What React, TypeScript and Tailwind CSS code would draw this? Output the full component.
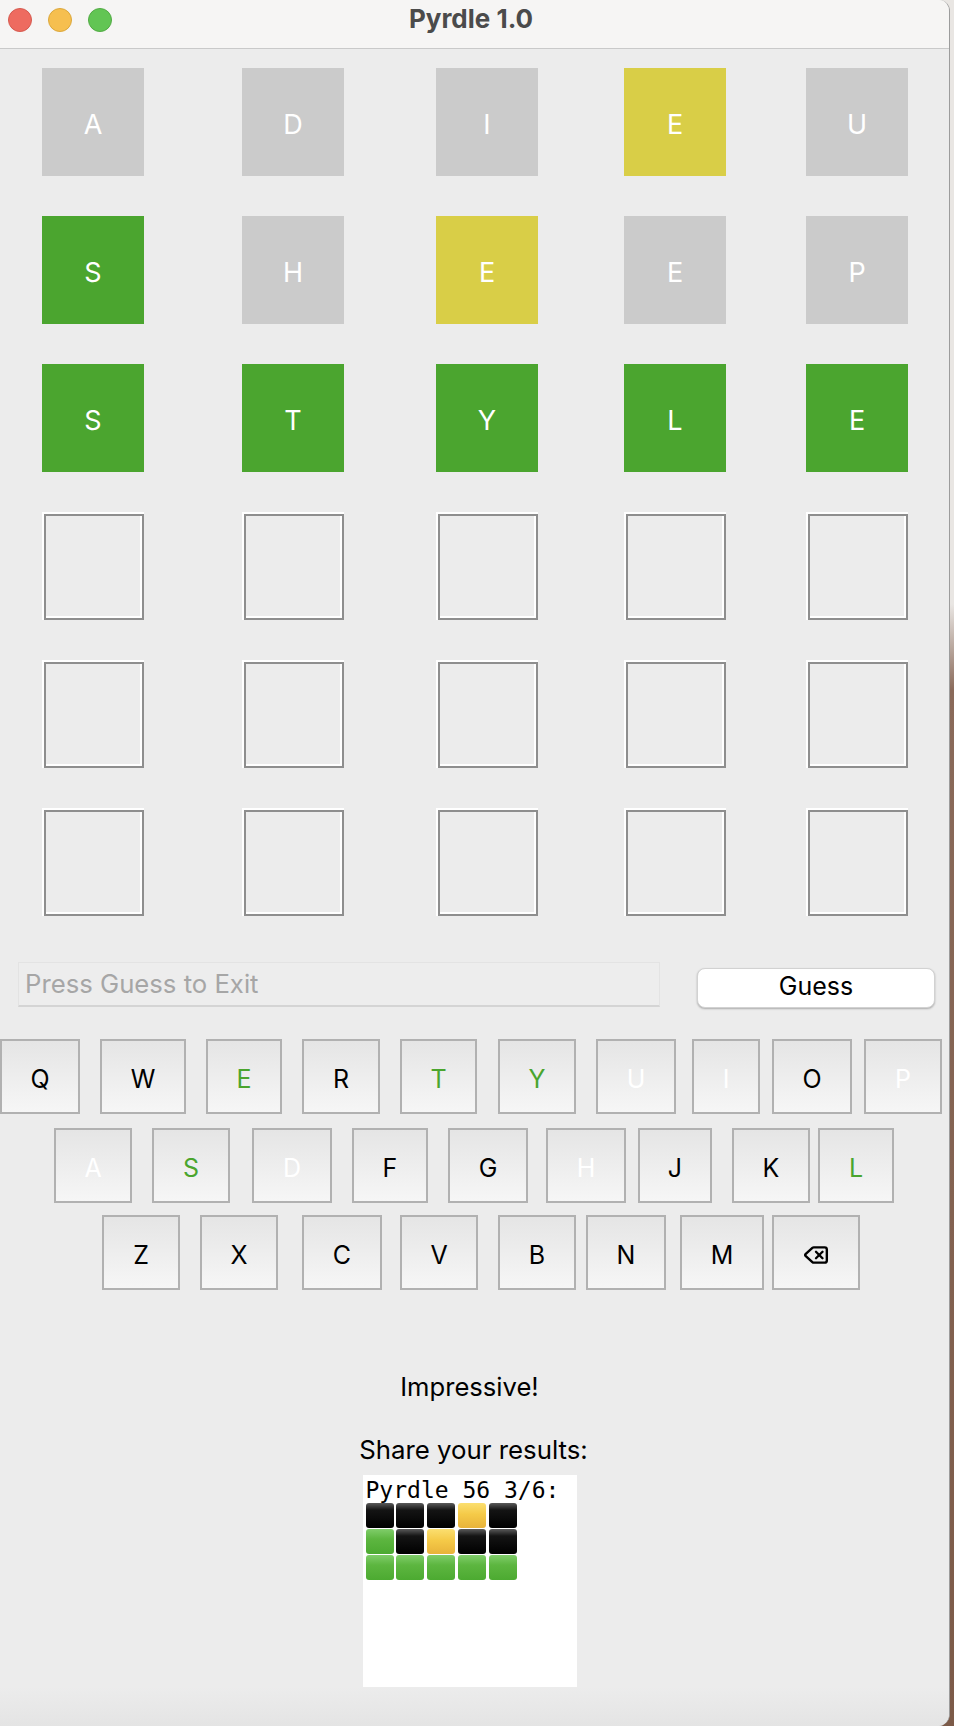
import React from 'react';

type TileState = 'gray' | 'yellow' | 'green' | 'empty';

const tileRows: [string, TileState][][] = [
  [['A', 'gray'], ['D', 'gray'], ['I', 'gray'], ['E', 'yellow'], ['U', 'gray']],
  [['S', 'green'], ['H', 'gray'], ['E', 'yellow'], ['E', 'gray'], ['P', 'gray']],
  [['S', 'green'], ['T', 'green'], ['Y', 'green'], ['L', 'green'], ['E', 'green']],
  [['', 'empty'], ['', 'empty'], ['', 'empty'], ['', 'empty'], ['', 'empty']],
  [['', 'empty'], ['', 'empty'], ['', 'empty'], ['', 'empty'], ['', 'empty']],
  [['', 'empty'], ['', 'empty'], ['', 'empty'], ['', 'empty'], ['', 'empty']],
];

const colMargins = ['ml-[42px]', 'ml-[98px]', 'ml-[92px]', 'ml-[86px]', 'ml-[80px]'];

const tileBg: Record<string, string> = {
  gray: 'bg-[#cbcbcb]',
  yellow: 'bg-[#d9ce47]',
  green: 'bg-[#4ba52f]',
};

const G = 'text-[#4aa52e]';
const W = 'text-white';
const B = 'text-black';

type Key = [string, string, string, string];

const kbRows: { mt: string; keys: Key[] }[] = [
  {
    mt: 'mt-[31px]',
    keys: [
      ['Q', 'w-[80px]', '', B],
      ['W', 'w-[86px]', 'ml-[20px]', B],
      ['E', 'w-[76px]', 'ml-[20px]', G],
      ['R', 'w-[78px]', 'ml-[20px]', B],
      ['T', 'w-[77px]', 'ml-[20px]', G],
      ['Y', 'w-[78px]', 'ml-[21px]', G],
      ['U', 'w-[80px]', 'ml-[20px]', W],
      ['I', 'w-[68px]', 'ml-[16px]', W],
      ['O', 'w-[80px]', 'ml-[12px]', B],
      ['P', 'w-[78px]', 'ml-[12px]', W],
    ],
  },
  {
    mt: 'mt-[14px]',
    keys: [
      ['A', 'w-[78px]', 'ml-[54px]', W],
      ['S', 'w-[78px]', 'ml-[20px]', G],
      ['D', 'w-[80px]', 'ml-[22px]', W],
      ['F', 'w-[76px]', 'ml-[20px]', B],
      ['G', 'w-[80px]', 'ml-[20px]', B],
      ['H', 'w-[80px]', 'ml-[18px]', W],
      ['J', 'w-[74px]', 'ml-[12px]', B],
      ['K', 'w-[78px]', 'ml-[20px]', B],
      ['L', 'w-[76px]', 'ml-[8px]', G],
    ],
  },
  {
    mt: 'mt-[12px]',
    keys: [
      ['Z', 'w-[78px]', 'ml-[102px]', B],
      ['X', 'w-[78px]', 'ml-[20px]', B],
      ['C', 'w-[80px]', 'ml-[24px]', B],
      ['V', 'w-[78px]', 'ml-[18px]', B],
      ['B', 'w-[78px]', 'ml-[20px]', B],
      ['N', 'w-[80px]', 'ml-[10px]', B],
      ['M', 'w-[84px]', 'ml-[14px]', B],
      ['⌫', 'w-[88px]', 'ml-[8px]', B],
    ],
  },
];

type Sq = 'b' | 'y' | 'g';
const shareRows: Sq[][] = [
  ['b', 'b', 'b', 'y', 'b'],
  ['g', 'b', 'y', 'b', 'b'],
  ['g', 'g', 'g', 'g', 'g'],
];
const sqBg: Record<Sq, string> = {
  b: 'bg-[linear-gradient(to_bottom,#5a5a5a_0%,#141414_28%,#000_100%)]',
  y: 'bg-[linear-gradient(to_bottom,#fbdf70_0%,#f5ca48_45%,#e8b33a_100%)]',
  g: 'bg-[linear-gradient(to_bottom,#80cd6a_0%,#5db640_40%,#4caa31_100%)]',
};

function BackspaceIcon() {
  return (
    <svg width="26" height="26" viewBox="0 0 24 24" fill="none" stroke="black" strokeWidth="2.2" strokeLinecap="round" strokeLinejoin="round">
      <path d="M10 5a2 2 0 0 0-1.344.519l-6.328 5.74a1 1 0 0 0 0 1.481l6.328 5.74A2 2 0 0 0 10 19h10a2 2 0 0 0 2-2V7a2 2 0 0 0-2-2z" />
      <path d="m12 9 6 6" />
      <path d="m18 9-6 6" />
    </svg>
  );
}

function Tile({ letter, state, margin }: { letter: string; state: TileState; margin: string }) {
  if (state === 'empty') {
    return (
      <div className={`${margin} w-[102px] h-[108px] border-t-2 border-l-2 border-white`}>
        <div className="w-full h-full border-2 border-[#8e8e8e] shadow-[inset_-2px_-2px_0_#ffffff]" />
      </div>
    );
  }
  return (
    <div
      className={`${margin} w-[102px] h-[108px] ${tileBg[state]} flex items-center justify-center pt-[6px] text-white text-[27px] font-[Inter,sans-serif]`}
    >
      {letter}
    </div>
  );
}

export default function App() {
  return (
    <div className="w-[954px] h-[1726px] flex bg-[linear-gradient(to_bottom,#e9e6e3_0%,#e9e6e3_35%,#8a6a5a_40%,#7c5a48_100%)] font-[Inter,sans-serif]">
      <div className="w-[950px] h-full bg-[#ececec] rounded-tr-[11px] rounded-br-[12px] border-r border-[#9c9c9c] overflow-hidden flex flex-col">
        {/* Title bar */}
        <div className="h-[49px] bg-[#f6f5f4] border-b border-[#c9c9c9] grid grid-cols-[1fr_auto_1fr] items-start">
          <div className="flex gap-[16px] pl-[8px] pt-[8px]">
            <div className="w-[24px] h-[24px] rounded-full bg-[#ee6b60] border border-[#d65a4f]" />
            <div className="w-[24px] h-[24px] rounded-full bg-[#f6bf4f] border border-[#dca83c]" />
            <div className="w-[24px] h-[24px] rounded-full bg-[#62c554] border border-[#52ab44]" />
          </div>
          <div className="h-[38px] leading-[38px] text-[26px] font-bold text-[#4b4b4b] pr-[7px]">Pyrdle 1.0</div>
          <div />
        </div>

        {/* Board */}
        <div className="pt-[19px] flex flex-col gap-[40px]">
          {tileRows.map((row, ri) => (
            <div key={ri} className="flex">
              {row.map(([l, s], ci) => (
                <Tile key={ci} letter={l} state={s} margin={colMargins[ci]} />
              ))}
            </div>
          ))}
        </div>

        {/* Input row */}
        <div className="mt-[46px] flex items-start">
          <div className="ml-[18px] w-[642px] h-[45px] border border-[#e3e3e3] border-b-2 border-b-[#d4d4d4] bg-[#ededed] flex items-center pl-[6px] text-[25.7px] text-[#a6a6a6]">
            Press Guess to Exit
          </div>
          <div className="ml-[37px] mt-[6px] w-[238px] h-[40px] bg-white rounded-[8px] border-[0.5px] border-[#d2d2d2] shadow-[0_1px_2px_rgba(0,0,0,0.28)] flex items-center justify-center pb-[3px] text-[25px] text-black">
            Guess
          </div>
        </div>

        {/* Keyboard */}
        <div className="flex flex-col">
          {kbRows.map((row, ri) => (
            <div key={ri} className={`${row.mt} flex`}>
              {row.keys.map(([k, w, m, c]) => (
                <div
                  key={k}
                  className={`${w} ${m} h-[75px] border-2 border-[#b1b1b1] bg-[linear-gradient(to_bottom,#e5e5e5,#f6f6f6)] flex items-center justify-center pt-[6px] text-[25px] ${c}`}
                >
                  {k === '⌫' ? (
                    <div className="-mt-[2px]">
                      <BackspaceIcon />
                    </div>
                  ) : (
                    k
                  )}
                </div>
              ))}
            </div>
          ))}
        </div>

        {/* Results */}
        <div className="flex flex-col items-center pr-[10px]">
          <div className="mt-[82px] text-[25.6px] leading-[30px] text-black">Impressive!</div>
          <div className="mt-[33px] text-[25.8px] leading-[30px] text-black pl-[8px]">Share your results:</div>
          <div className="mt-[10px] w-[214px] h-[212px] bg-white pt-[3px] pl-[3px]">
            <div className="font-['DejaVu_Sans_Mono',monospace] text-[23px] leading-[25px] text-black whitespace-pre">
              Pyrdle 56 3/6:
            </div>
            <div className="flex flex-col gap-[1px]">
              {shareRows.map((r, ri) => (
                <div key={ri} className="flex gap-[2.75px]">
                  {r.map((s, si) => (
                    <div key={si} className={`w-[28px] h-[25px] rounded-[3px] ${sqBg[s]}`} />
                  ))}
                </div>
              ))}
            </div>
          </div>
        </div>
        <div className="flex-1 bg-[linear-gradient(to_bottom,#ececec,#e4e4e4)]" />
      </div>
      <div className="flex-1" />
    </div>
  );
}
